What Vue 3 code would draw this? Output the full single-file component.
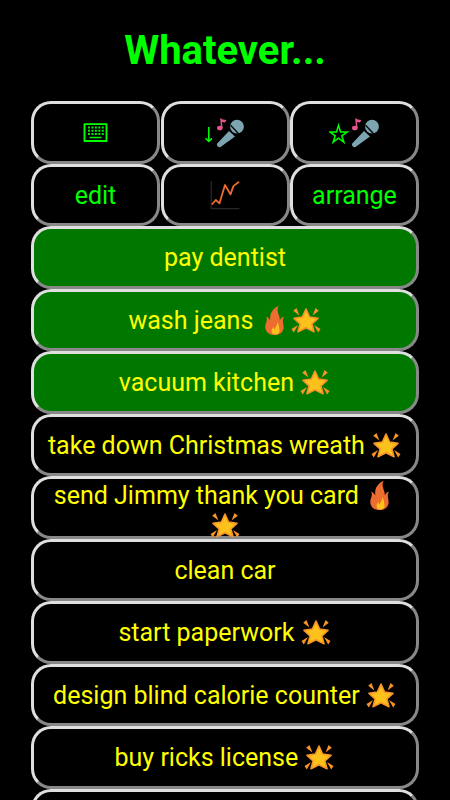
<script setup>
import { h } from 'vue'

const items = [
  { text: 'pay dentist', icons: [], done: true },
  { text: 'wash jeans', icons: ['fire', 'star'], done: true },
  { text: 'vacuum kitchen', icons: ['star'], done: true },
  { text: 'take down Christmas wreath', icons: ['star'] },
  { text: 'send Jimmy thank you card', icons: ['fire', 'star'] },
  { text: 'clean car', icons: [] },
  { text: 'start paperwork', icons: ['star'] },
  { text: 'design blind calorie counter', icons: ['star'] },
  { text: 'buy ricks license', icons: ['star'] },
  { text: '', icons: [] },
]

const p = (d, fill) => h('path', { d, fill })
const line = (d, stroke, w) => h('path', { d, fill: 'none', stroke, 'stroke-width': w, 'stroke-linejoin': 'round' })

const shapes = {
  star: () => [
    p('M2.2 5.7 5.5 3 8.4 10.4ZM27.8 5.7 24.5 3 21.6 10.4ZM.5 24.1 7 20 2.8 27.5ZM29.5 24.1 23 20 27.2 27.5Z', '#f79329'),
    h('path', {
      d: 'M15 4 18.6 12 27 13.3 20.9 19 23 26.7 15 22.7 7 26.7 9.1 19 3 13.3 11.4 12Z',
      fill: '#fcc21b', stroke: '#f79329', 'stroke-width': 1.6, 'stroke-linejoin': 'round',
    }),
  ],
  fire: () => [
    p('M18.6.8C12 4 9.4 9.2 10.3 15.4 9.2 14.2 8.3 12.6 6.1 11.6 8.2 15.6 5.3 17.4 5.3 22 5.3 27 9.3 30.1 14.6 30.1 20 30.1 23.6 26.9 23.6 22 23.6 17.6 21.6 15.4 24 11.8 21.4 12.4 20.5 14 19.8 15.6 20.4 10.6 15.6 6.6 18.6.8Z', '#ed6c30'),
    p('M17 17.2C17.7 21.2 14.6 22 14.8 24.6 13.8 24 13.6 23 13.6 22 10.8 24.2 10.6 29.4 15 29.5 18.2 29.5 20 27.5 19.5 25.2 19 22.6 19.3 19.4 17 17.2Z', '#fcc21b'),
  ],
  mic: () => [
    p('M14 14 20 19.6 5.5 30.1Q3.9 30.6 2.6 29.3 1.4 28 2.2 26.6Z', '#7ca5b1'),
    h('circle', { cx: 22, cy: 9.7, r: 6.9, fill: '#7ca5b1' }),
    line('M15.6 8.3 23.8 17', '#000', 1.3),
    h('ellipse', { cx: 4.8, cy: 11, rx: 2.8, ry: 2.3, fill: '#e5548d' }),
    p('M5.2 1Q7.4 3 11.4 3.1L10 5.4 6.9 5 7.6 11H6Z', '#e5548d'),
  ],
  chart: () => [
    line('M1.2 2V29.7H29.5', '#303030', 1),
    line('M1.8 25.5 5.8 21 9.5 24.3 15 6 20.5 15.4 23.4 7.1 29 2.7', '#ed6c30', 1.8),
  ],
  keyboard: () => [
    line('M4.5 7.1H26.5V24H4.5Z', '#0f0', 1.9),
    h('path', { d: 'M8 10.5H24M8 13.8H24M8 17H24', fill: 'none', stroke: '#0e0', 'stroke-width': 2, 'stroke-dasharray': '2 1.45' }),
    line('M9.5 20.5H21.7', '#0e0', 1.5),
  ],
  arrow: () => [line('M4.8 10V24.5M1.6 21.4 4.8 24.5 8 21.4', '#0f0', 1.5)],
  outlineStar: () => [
    h('path', { d: 'M9.5 8.4 11.5 14.9H18.3L12.8 18.8 14.9 25.2 9.5 21.2 4.1 25.2 6.2 18.8 .7 14.9H7.5Z', fill: 'none', stroke: '#0f0', 'stroke-width': 1.5 }),
  ],
}
const widths = { arrow: 11, outlineStar: 21 }

const Icon = ({ name }) => {
  const w = widths[name] || 31
  return h('svg', { viewBox: `0 0 ${w} 31`, width: w, height: 31, 'aria-hidden': 'true' }, shapes[name]())
}
Icon.props = ['name']
</script>

<template>
  <main class="page">
    <h1>Whatever...</h1>
    <div class="tools">
      <button class="btn"><Icon class="icon" name="keyboard" /></button>
      <button class="btn"><Icon class="icon" name="arrow" /><Icon class="icon" name="mic" /></button>
      <button class="btn"><Icon class="icon" name="outlineStar" /><Icon class="icon" name="mic" /></button>
      <button class="btn">edit</button>
      <button class="btn"><Icon class="icon" name="chart" /></button>
      <button class="btn">arrange</button>
    </div>
    <div class="list">
      <button v-for="(item, i) in items" :key="i" class="btn item" :class="{ done: item.done }">
        <span>{{ item.text }}{{ ' ' }}<Icon v-for="name in item.icons" :key="name" class="icon" :name="name" /></span>
      </button>
    </div>
  </main>
</template>

<style>
html,
body {
  background: #000;
  overflow: hidden;
}
</style>

<style scoped>
.page {
  box-sizing: border-box;
  height: 800px;
  overflow: hidden;
  padding: 27px 31px 0;
  background: #000;
  font-family: Roboto, "Liberation Sans", sans-serif;
}
h1 {
  height: 74px;
  margin: 0;
  color: #0f0;
  font-size: 40px;
  line-height: 48px;
  font-weight: 700;
  text-align: center;
}
.tools {
  display: grid;
  grid-template-columns: repeat(3, 1fr);
  grid-auto-rows: 62.5px;
  column-gap: 0.5px;
}
.list {
  display: grid;
  grid-auto-rows: 62.5px;
}
.btn {
  box-sizing: border-box;
  display: flex;
  align-items: safe center;
  justify-content: center;
  min-width: 0;
  margin: 0;
  padding: 2px 10px 0;
  border: 3px solid;
  border-color: #dfdfdf #888 #888 #dfdfdf;
  border-radius: 20px;
  background: #000;
  color: #0f0;
  font: 400 25px/30px Roboto, "Liberation Sans", sans-serif;
  text-align: center;
}
.item {
  color: #ff0;
}
.done {
  background: #007800;
}
.icon {
  display: inline-block;
  flex: none;
  margin: -7px 0 -5px;
}
.item .icon {
  margin: -6px 0;
  vertical-align: -1px;
}
</style>
